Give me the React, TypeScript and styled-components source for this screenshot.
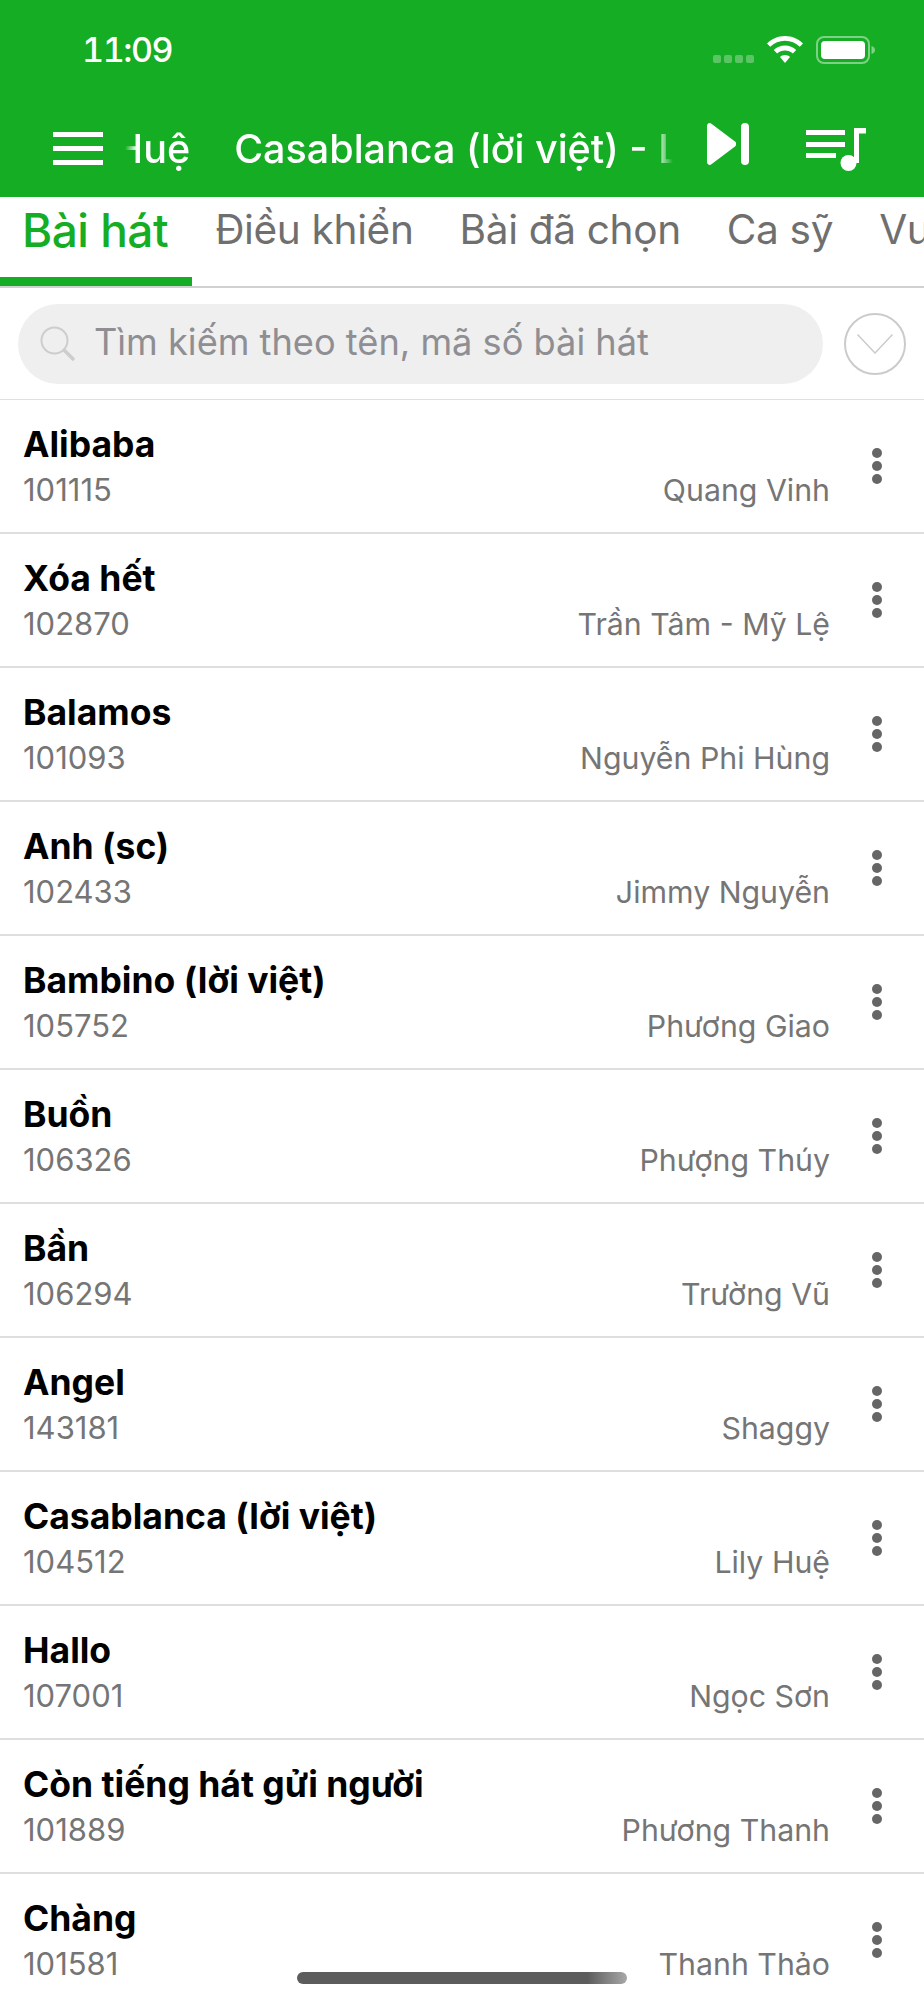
import React from 'react';
import styled, { createGlobalStyle } from 'styled-components';

const GlobalStyle = createGlobalStyle`
  html, body {
    margin: 0;
    padding: 0;
    background: #fff;
  }
  * {
    box-sizing: border-box;
  }
`;

const Screen = styled.div`
  position: relative;
  width: 924px;
  height: 2000px;
  overflow: hidden;
  background: #fff;
  font-family: Inter, "Noto Sans", sans-serif;
`;

const Header = styled.header`
  height: 197px;
  background: #15ad23;
  color: #fff;
`;

const StatusBar = styled.div`
  height: 100px;
  display: flex;
  justify-content: space-between;
  padding: 32px 49px 0 82px;
`;

const Clock = styled.div`
  font-size: 34px;
  line-height: 36px;
  font-weight: 500;
  font-variant-numeric: tabular-nums;
  letter-spacing: -1.4px;
`;

const StatusIcons = styled.div`
  display: flex;
  align-items: flex-start;
  padding-top: 4px;
  gap: 13px;
`;

const SignalDots = styled.div`
  display: flex;
  gap: 3px;
  margin-top: 19px;
`;

const SignalDot = styled.span`
  width: 8px;
  height: 8px;
  border-radius: 2px;
  background: rgba(255, 255, 255, 0.3);
`;

const NavBar = styled.div`
  height: 97px;
  display: flex;
  align-items: flex-start;
  padding-left: 53px;
`;

const Burger = styled.div`
  width: 50px;
  height: 33px;
  margin-top: 32px;
  flex-shrink: 0;
  display: flex;
  flex-direction: column;
  justify-content: space-between;
`;

const BurgerBar = styled.span`
  height: 5px;
  background: #fff;
`;

const Marquee = styled.div`
  width: 550px;
  margin: 26px 0 0 22px;
  overflow: hidden;
  white-space: nowrap;
  -webkit-mask-image: linear-gradient(90deg, transparent 0, #000 12px, #000 530px, transparent 548px);
  mask-image: linear-gradient(90deg, transparent 0, #000 12px, #000 530px, transparent 548px);
`;

const MarqueeTrack = styled.div`
  display: inline-flex;
  gap: 44px;
  font-size: 39.5px;
  line-height: 46px;
  font-weight: 500;
  transform: translateX(-87px);
`;

const NavIcon = styled.svg`
  flex-shrink: 0;
`;

const SkipIcon = styled(NavIcon)`
  margin: 23px 0 0 32px;
`;

const QueueIcon = styled(NavIcon)`
  margin: 28px 0 0 57px;
`;

const TabBar = styled.nav`
  height: 91px;
  display: flex;
  overflow: hidden;
  border-bottom: 2px solid #d0d0d0;
`;

const Tab = styled.div<{ $active?: boolean }>`
  flex-shrink: 0;
  height: 89px;
  line-height: 66px;
  white-space: nowrap;
  padding: ${({ $active }) => ($active ? '0 24px 0 22px' : '0 23px')};
  font-size: ${({ $active }) => ($active ? 46 : 40.6)}px;
  letter-spacing: ${({ $active }) => ($active ? -0.5 : -0.35)}px;
  font-weight: ${({ $active }) => ($active ? 500 : 400)};
  color: ${({ $active }) => ($active ? '#15ad23' : '#6f6f6f')};
  border-bottom: 9px solid ${({ $active }) => ($active ? '#15ad23' : 'transparent')};
`;

const SearchRow = styled.div`
  height: 112px;
  display: flex;
  align-items: center;
  padding: 0 18px;
  gap: 21px;
  border-bottom: 1px solid #e0e0e0;
`;

const SearchPill = styled.div`
  flex: 1;
  height: 80px;
  border-radius: 40px;
  background: #efefef;
  display: flex;
  align-items: center;
  padding-left: 22px;
  gap: 19px;
`;

const Placeholder = styled.span`
  font-size: 36.2px;
  padding-bottom: 4px;
  color: #8e8e93;
  white-space: nowrap;
`;

const ExpandButton = styled.div`
  width: 62px;
  height: 62px;
  flex-shrink: 0;
  border-radius: 50%;
  border: 2px solid #cbcbcb;
  display: flex;
  align-items: center;
  justify-content: center;
`;

const Row = styled.div`
  height: 134px;
  display: flex;
  align-items: center;
  padding: 0 42px 0 23px;
  border-bottom: 2px solid #dedede;
`;

const RowBody = styled.div`
  flex: 1;
  min-width: 0;
  padding-top: 2px;
`;

const SongTitle = styled.div`
  font-size: 35.5px;
  line-height: 44px;
  font-weight: 700;
  color: #000;
`;

const RowMeta = styled.div`
  display: flex;
  justify-content: space-between;
  margin-top: 2px;
  line-height: 42px;
  color: #757575;
`;

const SongCode = styled.span`
  font-size: 31px;
`;

const Singer = styled.span`
  font-size: 30.3px;
`;

const MoreDots = styled.div`
  width: 10px;
  margin-left: 42px;
  display: flex;
  flex-direction: column;
  gap: 3px;
`;

const Dot = styled.span`
  width: 10px;
  height: 10px;
  border-radius: 50%;
  background: #666;
`;

const HomeBar = styled.div`
  position: absolute;
  left: 297px;
  bottom: 16px;
  width: 330px;
  height: 12px;
  border-radius: 6px;
  background: linear-gradient(90deg, #5c5c5c 0, #5c5c5c 88%, #a8a8a8 100%);
`;

const songs = [
  { title: 'Alibaba', code: '101115', singer: 'Quang Vinh' },
  { title: 'Xóa hết', code: '102870', singer: 'Trần Tâm - Mỹ Lệ' },
  { title: 'Balamos', code: '101093', singer: 'Nguyễn Phi Hùng' },
  { title: 'Anh (sc)', code: '102433', singer: 'Jimmy Nguyễn' },
  { title: 'Bambino (lời việt)', code: '105752', singer: 'Phương Giao' },
  { title: 'Buồn', code: '106326', singer: 'Phượng Thúy' },
  { title: 'Bần', code: '106294', singer: 'Trường Vũ' },
  { title: 'Angel', code: '143181', singer: 'Shaggy' },
  { title: 'Casablanca (lời việt)', code: '104512', singer: 'Lily Huệ' },
  { title: 'Hallo', code: '107001', singer: 'Ngọc Sơn' },
  { title: 'Còn tiếng hát gửi người', code: '101889', singer: 'Phương Thanh' },
  { title: 'Chàng', code: '101581', singer: 'Thanh Thảo' },
];

const tabs = ['Bài hát', 'Điều khiển', 'Bài đã chọn', 'Ca sỹ', 'Vui'];

const App = () => {
  return (
    <Screen>
      <GlobalStyle />
      <Header>
        <StatusBar>
          <Clock>11:09</Clock>
          <StatusIcons>
            <SignalDots>
              <SignalDot />
              <SignalDot />
              <SignalDot />
              <SignalDot />
            </SignalDots>
            <svg width="36" height="27" viewBox="0 0 36 27" fill="#fff">
              <path d="M18 0C11 0 5 2.700 0 7.400L3.200 10.800C7.200 7 12.300 4.800 18 4.800S28.800 7 32.800 10.800L36 7.400C31 2.700 25 0 18 0Z" />
              <path d="M18 9.500C13.700 9.500 9.800 11.200 6.800 14L10.100 17.500C12.200 15.600 15 14.400 18 14.400S23.800 15.600 25.900 17.500L29.200 14C26.200 11.200 22.300 9.500 18 9.500Z" />
              <path d="M18 19C16.100 19 14.400 19.700 13 20.900L18 27L23 20.900C21.600 19.700 19.900 19 18 19Z" />
            </svg>
            <svg width="59" height="28" viewBox="0 0 59 28">
              <rect x="1" y="1" width="52" height="26" rx="7" fill="none" stroke="#fff" strokeOpacity="0.45" strokeWidth="2" />
              <rect x="5" y="5" width="44" height="18" rx="4" fill="#fff" />
              <path d="M55.500 10C57.500 10.600 59 12 59 14S57.500 17.400 55.500 18Z" fill="#fff" fillOpacity="0.45" />
            </svg>
          </StatusIcons>
        </StatusBar>
        <NavBar>
          <Burger>
            <BurgerBar />
            <BurgerBar />
            <BurgerBar />
          </Burger>
          <Marquee>
            <MarqueeTrack>
              <span>Lily Huệ</span>
              <span>Casablanca (lời việt) - Lily Huệ</span>
            </MarqueeTrack>
          </Marquee>
          <SkipIcon width="42" height="42" viewBox="0 0 42 42" fill="#fff">
            <path d="M0 3C0 .6 2.500-.7 4.400 .7L28 18.500C29.500 19.700 29.500 22.300 28 23.500L4.400 41.300C2.500 42.700 0 41.400 0 39Z" />
            <rect x="34" y="0" width="8" height="42" rx="4" />
          </SkipIcon>
          <QueueIcon width="60" height="43" viewBox="0 0 60 43" fill="#fff">
            <rect x="0" y="2" width="39" height="5" />
            <rect x="0" y="14" width="39" height="5" />
            <rect x="0" y="25" width="30" height="5" />
            <path d="M48 0H60V5.500H53V35H48Z" />
            <circle cx="42.500" cy="35" r="8" />
          </QueueIcon>
        </NavBar>
      </Header>
      <TabBar>
        {tabs.map((tab, i) => (
          <Tab key={tab} $active={i === 0}>
            {tab}
          </Tab>
        ))}
      </TabBar>
      <SearchRow>
        <SearchPill>
          <svg width="35" height="35" viewBox="0 0 35 35" fill="none" stroke="#cdcdcd">
            <circle cx="14.500" cy="14.500" r="13" strokeWidth="2" />
            <path d="M24 24L34 34" strokeWidth="3.500" />
          </svg>
          <Placeholder>Tìm kiếm theo tên, mã số bài hát</Placeholder>
        </SearchPill>
        <ExpandButton>
          <svg width="36" height="20" viewBox="0 0 36 20" fill="none" stroke="#cbcbcb" strokeWidth="1.500">
            <path d="M.5 .5L18 19L35.500 .5" />
          </svg>
        </ExpandButton>
      </SearchRow>
      {songs.map((song) => (
        <Row key={song.code}>
          <RowBody>
            <SongTitle>{song.title}</SongTitle>
            <RowMeta>
              <SongCode>{song.code}</SongCode>
              <Singer>{song.singer}</Singer>
            </RowMeta>
          </RowBody>
          <MoreDots>
            <Dot />
            <Dot />
            <Dot />
          </MoreDots>
        </Row>
      ))}
      <HomeBar />
    </Screen>
  );
};

export default App;
